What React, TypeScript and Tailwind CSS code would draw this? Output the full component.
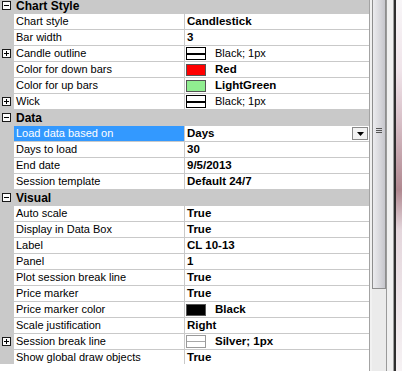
import React from "react";

type Swatch = "pen" | "silverpen" | "red" | "green" | "black";

interface Prop {
  name: string;
  value: string;
  bold?: boolean;
  swatch?: Swatch;
  expandable?: boolean;
  selected?: boolean;
}

interface Section {
  title: string;
  props: Prop[];
}

const sections: Section[] = [
  {
    title: "Chart Style",
    props: [
      { name: "Chart style", value: "Candlestick", bold: true },
      { name: "Bar width", value: "3", bold: true },
      { name: "Candle outline", value: "Black; 1px", swatch: "pen", expandable: true },
      { name: "Color for down bars", value: "Red", bold: true, swatch: "red" },
      { name: "Color for up bars", value: "LightGreen", bold: true, swatch: "green" },
      { name: "Wick", value: "Black; 1px", swatch: "pen", expandable: true },
    ],
  },
  {
    title: "Data",
    props: [
      { name: "Load data based on", value: "Days", bold: true, selected: true },
      { name: "Days to load", value: "30", bold: true },
      { name: "End date", value: "9/5/2013", bold: true },
      { name: "Session template", value: "Default 24/7", bold: true },
    ],
  },
  {
    title: "Visual",
    props: [
      { name: "Auto scale", value: "True", bold: true },
      { name: "Display in Data Box", value: "True", bold: true },
      { name: "Label", value: "CL 10-13", bold: true },
      { name: "Panel", value: "1", bold: true },
      { name: "Plot session break line", value: "True", bold: true },
      { name: "Price marker", value: "True", bold: true },
      { name: "Price marker color", value: "Black", bold: true, swatch: "black" },
      { name: "Scale justification", value: "Right", bold: true },
      { name: "Session break line", value: "Silver; 1px", bold: true, swatch: "silverpen", expandable: true },
      { name: "Show global draw objects", value: "True", bold: true },
    ],
  },
];

function ExpandBox({ open }: { open: boolean }) {
  return (
    <svg width="9" height="9" viewBox="0 0 9 9" className="block">
      <rect x="0.5" y="0.5" width="8" height="8" fill="#fafafa" stroke="#1a1a1a" />
      <line x1="2" y1="4.5" x2="7" y2="4.5" stroke="#000" />
      {!open && <line x1="4.5" y1="2" x2="4.5" y2="7" stroke="#000" />}
    </svg>
  );
}

function SwatchBox({ kind }: { kind: Swatch }) {
  if (kind === "pen" || kind === "silverpen") {
    const c = kind === "pen" ? "border-black" : "border-[#9a9a9a]";
    const l = kind === "pen" ? "bg-black" : "bg-[#a8a8a8]";
    return (
      <div className={`w-[20px] h-[13px] border bg-white flex items-center ${c}`}>
        <div className={`w-full ${kind === "pen" ? "h-[2px]" : "h-[1px]"} ${l}`} />
      </div>
    );
  }
  const fill =
    kind === "red" ? "bg-[#ff0000]" : kind === "green" ? "bg-[#90ee90]" : "bg-black";
  return <div className={`w-[20px] h-[12px] border border-[#555] ${fill}`} />;
}

function Row({ p }: { p: Prop }) {
  return (
    <div className="flex h-[16px]">
      <div className="w-[14px] bg-[#c9c9c9] flex items-start pl-[2px] pt-[3px]">
        {p.expandable && <ExpandBox open={false} />}
      </div>
      <div
        className={`w-[171px] border-b border-r border-[#c9c9c9] pl-[2px] text-[11px] leading-[15px] whitespace-nowrap ${
          p.selected ? "bg-[#3399ff] text-white" : "bg-white text-black"
        }`}
      >
        {p.name}
      </div>
      <div className="flex-1 border-b border-[#c9c9c9] bg-white flex items-center pl-[1px] pr-[1px] text-black whitespace-nowrap">
        {p.swatch && (
          <div className="mr-[9px]">
            <SwatchBox kind={p.swatch} />
          </div>
        )}
        <span
          className={`${p.bold ? "font-bold text-[11.5px]" : "text-[11px]"} leading-[15px] ${
            p.swatch ? "" : "pl-[1px]"
          }`}
        >
          {p.value}
        </span>
        {p.selected && (
          <div className="ml-auto w-[16px] h-[13px] border border-[#8a8a8a] bg-[#f2f2f2] flex items-center justify-center">
            <svg width="7" height="4" viewBox="0 0 7 4">
              <path d="M0 0H7L3.5 4Z" fill="#000" />
            </svg>
          </div>
        )}
      </div>
    </div>
  );
}

export default function App() {
  return (
    <div className="w-[402px] h-[371px] overflow-hidden bg-white flex font-['Liberation_Sans',Arial,sans-serif]">
      {/* property grid */}
      <div className="w-[369px] h-[371px] flex flex-col">
        <div className="h-[364px] overflow-hidden">
          <div className="-mt-[2px]">
            {sections.map((s) => (
              <div key={s.title}>
                <div className="flex h-[16px] bg-[#c9c9c9]">
                  <div className="w-[14px] pl-[2px] pt-[3px]">
                    <ExpandBox open />
                  </div>
                  <div className="pl-[2px] text-[12px] leading-[16px] font-bold text-black">
                    {s.title}
                  </div>
                </div>
                {s.props.map((p) => (
                  <Row key={p.name} p={p} />
                ))}
              </div>
            ))}
          </div>
        </div>
      </div>

      {/* scrollbar and frame */}
      <div className="w-[1px] h-full bg-[#a3a3a3]" />
      <div className="w-[2px] h-full bg-[#f1f1f1]" />
      <div className="w-[14px] h-full flex flex-col bg-[#ebebeb]">
        <div className="h-[289px] border border-t-0 border-[#8e8e8e] bg-[linear-gradient(to_right,#ececef,#dcdce0_45%,#c6c6cc)] flex flex-col items-center">
          <div className="mt-[128px] flex flex-col gap-[1px] w-[6px]">
            <div className="h-[1px] bg-[#555]" />
            <div className="h-[1px] bg-[#555]" />
            <div className="h-[1px] bg-[#555]" />
          </div>
        </div>
      </div>
      <div className="w-[1px] h-full bg-[#9a9a9a]" />
      <div className="w-[6px] h-full bg-[#f0f0f0]" />
      <div className="w-[1px] h-full bg-[#a0a0a0]" />
      <div className="w-[2px] h-full bg-[#2e2e2e]" />
      <div className="flex-1 h-full bg-[linear-gradient(to_bottom,#f8f6f8_0px,#f0e4ea_70px,#d8c0c8_120px,#b08890_190px,#e4d6dc_230px,#f6f2f4_371px)]" />
    </div>
  );
}
